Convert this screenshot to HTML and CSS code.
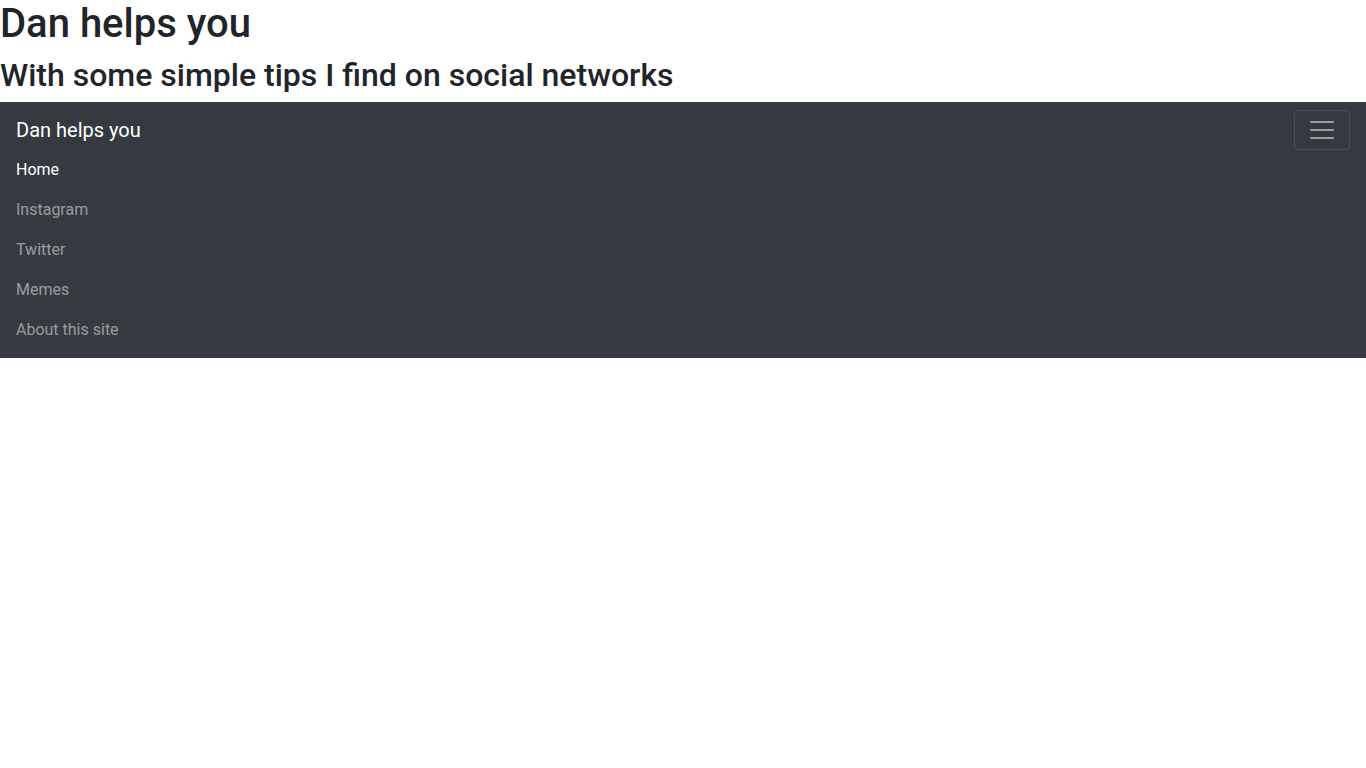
FILE: index.html
```html
<!DOCTYPE html>
<html lang="en">
<head>
<meta charset="utf-8">
<title>Dan helps you</title>
<link rel="stylesheet" href="styles.css">
</head>
<body>
<h1 class="title">Dan helps you</h1>
<h2 class="subtitle">With some simple tips I find on social networks</h2>
<nav class="navbar">
  <div class="navbar-top">
    <a class="brand" href="#">Dan helps you</a>
    <button class="toggler" type="button" aria-label="Toggle navigation">
      <svg width="30" height="30" viewBox="0 0 30 30"><path stroke="rgba(255,255,255,0.5)" stroke-linecap="round" stroke-miterlimit="10" stroke-width="2" d="M4 7h22M4 15h22M4 23h22"/></svg>
    </button>
  </div>
  <ul class="nav">
    <li><a class="nav-link active" href="#">Home</a></li>
    <li><a class="nav-link" href="#">Instagram</a></li>
    <li><a class="nav-link" href="#">Twitter</a></li>
    <li><a class="nav-link" href="#">Memes</a></li>
    <li><a class="nav-link" href="#">About this site</a></li>
  </ul>
</nav>
</body>
</html>
```
FILE: styles.css
```css
* { box-sizing: border-box; }
body {
  margin: 0;
  font-family: Roboto, "Liberation Sans", sans-serif;
  font-size: 16px;
  line-height: 1.5;
  color: #212529;
  background: #fff;
}
.title, .subtitle {
  margin: 0 0 8px;
  font-weight: 500;
  line-height: 1.2;
}
.title { font-size: 40px; }
.subtitle { font-size: 32px; }
.navbar {
  background: #343a40;
  padding: 8px 16px;
}
.navbar-top {
  display: flex;
  justify-content: space-between;
  align-items: center;
}
.brand {
  color: #fff;
  text-decoration: none;
  font-size: 20px;
  line-height: 30px;
  padding: 5px 0;
}
.toggler {
  display: flex;
  padding: 4px 12px;
  background: transparent;
  border: 1px solid rgba(255,255,255,0.1);
  border-radius: 4px;
  line-height: 1;
}
.nav {
  list-style: none;
  margin: 0;
  padding: 0;
}
.nav-link {
  display: block;
  padding: 8px 0;
  color: rgba(255,255,255,0.5);
  text-decoration: none;
}
.nav-link.active { color: #fff; }
```
